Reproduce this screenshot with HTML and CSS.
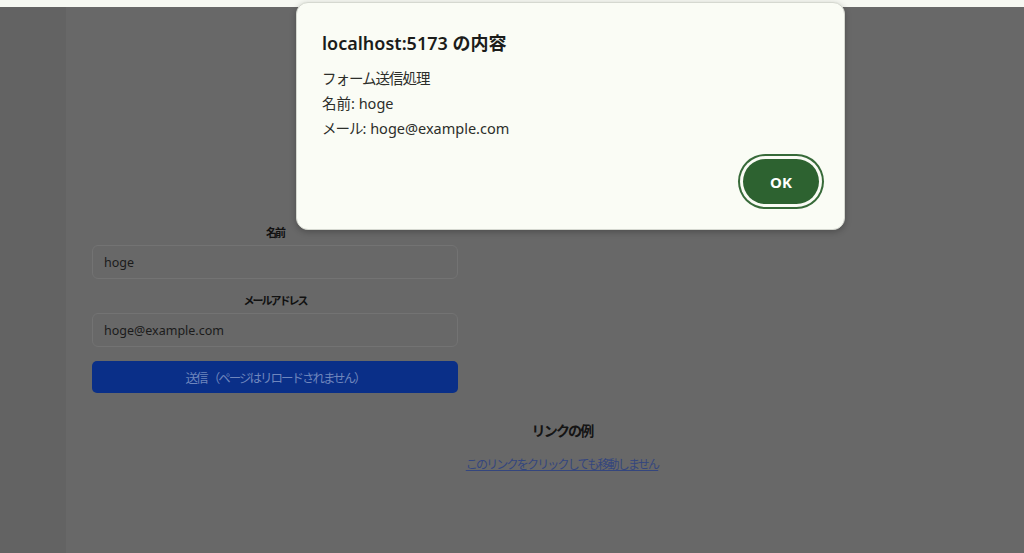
FILE: index.html
```html
<!DOCTYPE html>
<html lang="ja">
<head>
  <meta charset="UTF-8">
  <title>フォームの例</title>
  <link rel="stylesheet" href="styles.css">
</head>
<body>
  <div class="topbar"></div>

  <div class="page">
    <form class="form">
      <label class="label" for="name">名前</label>
      <input class="field" id="name" type="text" value="hoge">

      <label class="label" for="mail">メールアドレス</label>
      <input class="field" id="mail" type="email" value="hoge@example.com">

      <button class="submit" type="button">送信 （ページはリロードされません）</button>
    </form>

    <div class="links">
      <h2>リンクの例</h2>
      <a href="#">このリンクをクリックしても移動しません</a>
    </div>
  </div>

  <!-- alert() のダイアログ -->
  <div class="dialog">
    <h1 class="dialog-title">localhost:5173 の内容</h1>
    <div class="dialog-body">
      <div><span class="kana">フォーム送信処理</span></div>
      <div>名前: hoge</div>
      <div><span class="kana">メール</span>: hoge@example.com</div>
    </div>
    <div class="dialog-actions">
      <button class="ok" type="button">OK</button>
    </div>
  </div>
</body>
</html>
```

FILE: styles.css
```css
body {
  margin: 0;
  background: #636363;
  font-family: "Noto Sans", "Noto Sans CJK JP", sans-serif;
  color: #151515;
  overflow: hidden;
  height: 553px;
}
.topbar {
  height: 7px;
  background: #f6f8f2;
}
.page {
  margin-left: 66px;
  height: 546px;
  background: #686868;
  padding-top: 218px;
  box-sizing: border-box;
}
.form {
  width: 366px;
  margin-left: 26px;
  display: flex;
  flex-direction: column;
}
.label {
  text-align: center;
  font-size: 11px;
  font-weight: 700;
  line-height: 16px;
  margin-bottom: 4px;
  letter-spacing: -2px;
  color: #111;
}
.field {
  height: 34px;
  box-sizing: border-box;
  border: 1px solid #737373;
  border-radius: 6px;
  background: #686868;
  padding: 0 11px;
  font-family: inherit;
  font-size: 12.5px;
  color: #1b1b1b;
  margin-bottom: 14px;
}
.submit {
  height: 32px;
  border: none;
  border-radius: 5px;
  background: #0a2f88;
  color: #6f86bd;
  font-family: inherit;
  font-size: 12.5px;
  letter-spacing: -2px;
}
.links {
  width: 900px;
  margin-left: 46px;
  text-align: center;
}
.links h2 {
  margin: 26px 0 0;
  font-size: 14px;
  line-height: 24px;
  font-weight: 700;
  letter-spacing: -1.8px;
  color: #141414;
}
.links a {
  display: inline-block;
  margin-top: 12px;
  font-size: 12px;
  letter-spacing: -1.8px;
  color: #34467e;
  text-decoration: underline;
}

.dialog {
  position: absolute;
  left: 296px;
  top: 2px;
  width: 549px;
  height: 228px;
  box-sizing: border-box;
  background: #fafcf5;
  border: 1px solid #d5d8d0;
  border-radius: 12px;
  box-shadow: 0 2px 6px rgba(0, 0, 0, 0.25);
  padding: 28px 20px 20px 25px;
  display: flex;
  flex-direction: column;
}
.dialog-title {
  margin: 0;
  font-size: 18px;
  line-height: 24px;
  font-weight: 600;
  color: #1b1c1a;
}
.dialog-body {
  margin-top: 11px;
  font-size: 14.5px;
  line-height: 25px;
  color: #2c2e2a;
}
.dialog-body .kana {
  letter-spacing: -1px;
}
.dialog-actions {
  margin-top: auto;
  display: flex;
  justify-content: flex-end;
  padding: 5px;
}
.ok {
  width: 76px;
  height: 45px;
  border: none;
  border-radius: 23px;
  background: #2d6230;
  color: #fff;
  font-family: inherit;
  font-size: 15px;
  font-weight: 700;
  box-shadow: 0 0 0 3px #fafcf5, 0 0 0 5px #376a39;
}
```
